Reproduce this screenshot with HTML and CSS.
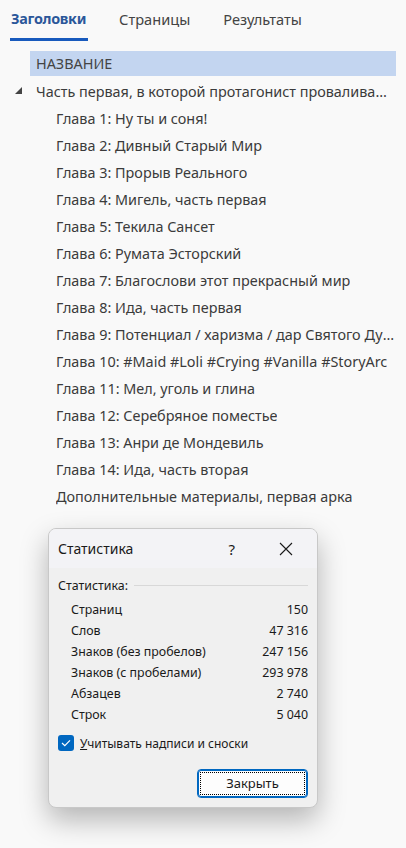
FILE: index.html
```html
<!DOCTYPE html>
<html lang="ru">
  <head>
    <meta charset="UTF-8" />
    <title>Навигация</title>
    <link rel="stylesheet" href="styles.css">
  </head>
  <body>
    <!-- tabs -->
    <div class="tabs">
      <div class="tab active">Заголовки</div>
      <div class="tab">Страницы</div>
      <div class="tab">Результаты</div>
    </div>

    <!-- heading tree -->
    <div class="tree">
      <div class="row title">НАЗВАНИЕ</div>
      <div class="row part">
        <span class="arrow"></span>
        <span class="label">Часть первая, в которой протагонист проваливается в другой мир</span>
      </div>
      <div class="row chapter"><span class="label">Глава 1: Ну ты и соня!</span></div>
      <div class="row chapter"><span class="label">Глава 2: Дивный Старый Мир</span></div>
      <div class="row chapter"><span class="label">Глава 3: Прорыв Реального</span></div>
      <div class="row chapter"><span class="label">Глава 4: Мигель, часть первая</span></div>
      <div class="row chapter"><span class="label">Глава 5: Текила Сансет</span></div>
      <div class="row chapter"><span class="label">Глава 6: Румата Эсторский</span></div>
      <div class="row chapter"><span class="label">Глава 7: Благослови этот прекрасный мир</span></div>
      <div class="row chapter"><span class="label">Глава 8: Ида, часть первая</span></div>
      <div class="row chapter"><span class="label">Глава 9: Потенциал / харизма / дар Святого Духа</span></div>
      <div class="row chapter"><span class="label">Глава 10: #Maid #Loli #Crying #Vanilla #StoryArc</span></div>
      <div class="row chapter"><span class="label">Глава 11: Мел, уголь и глина</span></div>
      <div class="row chapter"><span class="label">Глава 12: Серебряное поместье</span></div>
      <div class="row chapter"><span class="label">Глава 13: Анри де Мондевиль</span></div>
      <div class="row chapter"><span class="label">Глава 14: Ида, часть вторая</span></div>
      <div class="row chapter"><span class="label">Дополнительные материалы, первая арка</span></div>
    </div>

    <!-- statistics window -->
    <div class="dialog">
      <div class="dialog-head">
        <span class="dialog-title">Статистика</span>
        <span class="help">?</span>
        <svg class="close" width="14" height="14" viewBox="0 0 14 14">
          <path d="M1 1 L13 13 M13 1 L1 13" stroke="#1a1a1a" stroke-width="1.1" fill="none" />
        </svg>
      </div>
      <div class="dialog-body">
        <div class="group">
          <span>Статистика:</span>
          <span class="group-line"></span>
        </div>
        <table class="stats">
          <tr><td>Страниц</td><td>150</td></tr>
          <tr><td>Слов</td><td>47 316</td></tr>
          <tr><td>Знаков (без пробелов)</td><td>247 156</td></tr>
          <tr><td>Знаков (с пробелами)</td><td>293 978</td></tr>
          <tr><td>Абзацев</td><td>2 740</td></tr>
          <tr><td>Строк</td><td>5 040</td></tr>
        </table>
        <label class="check">
          <span class="box">
            <svg width="10" height="8" viewBox="0 0 10 8">
              <path d="M1 4 L3.8 6.6 L9 1.4" stroke="#fff" stroke-width="1.2" fill="none" />
            </svg>
          </span>
          <span><u>У</u>читывать надписи и сноски</span>
        </label>
        <div class="actions">
          <button class="btn"><span class="focus">Закрыть</span></button>
        </div>
      </div>
    </div>
  </body>
</html>
```

FILE: styles.css
```css
body {
  margin: 0;
  width: 406px;
  height: 848px;
  overflow: hidden;
  position: relative;
  background-color: #f9f9f9;
  font-family: "Noto Sans", sans-serif;
  font-size: 14.4px;
  color: #3b3b3b;
}

/* tabs */
.tabs {
  display: flex;
  padding: 8px 0 0 10px;
  height: 33px;
}
.tab {
  font-size: 14.6px;
  color: #444;
  line-height: 22px;
}
.tab:nth-child(2) {
  margin-left: 31px;
}
.tab:nth-child(3) {
  margin-left: 33px;
}
.tab.active {
  color: #2b579a;
  font-weight: bold;
  font-size: 14.4px;
  letter-spacing: -0.3px;
  padding: 0 2px 0 1px;
  border-bottom: 3px solid #185abd;
  height: 30px;
}

/* tree */
.tree {
  margin-top: 10px;
}
.row {
  height: 27px;
  display: flex;
  align-items: center;
  white-space: nowrap;
  overflow: hidden;
}
.row .label {
  overflow: hidden;
  text-overflow: ellipsis;
}
.title {
  margin: 0 10px 0 30px;
  height: 25px;
  padding-left: 6px;
  background-color: #c3d5f0;
  color: #444;
  margin-bottom: 2px;
}
.part {
  padding-left: 15px;
  padding-right: 16px;
}
.arrow {
  flex: none;
  width: 0;
  height: 0;
  border-left: 7px solid transparent;
  border-bottom: 7px solid #444;
  margin-right: 14px;
  margin-top: -2px;
}
.chapter {
  padding-left: 56px;
  padding-right: 10px;
}

/* dialog */
.dialog {
  position: absolute;
  left: 48px;
  top: 528px;
  width: 270px;
  height: 280px;
  border-radius: 8px;
  background-color: #f0f0f0;
  border: 1px solid #c8c8c8;
  box-sizing: border-box;
  box-shadow: 0 12px 28px rgba(0, 0, 0, 0.28);
  overflow: hidden;
  color: #1a1a1a;
  font-size: 12.4px;
}
.dialog-head {
  height: 39px;
  background-color: #f3f3f6;
  display: flex;
  align-items: center;
  padding-left: 9px;
}
.dialog-title {
  font-size: 14px;
  flex: 1;
}
.help {
  font-size: 15px;
  margin-right: 44px;
}
.close {
  margin-right: 24px;
}
.dialog-body {
  padding: 8px 9px 0 9px;
}
.group {
  display: flex;
  align-items: center;
  height: 18px;
}
.group-line {
  flex: 1;
  height: 1px;
  background-color: #d8d8d8;
  margin-left: 6px;
}
.stats {
  width: 100%;
  border-collapse: collapse;
  margin-top: 5px;
}
.stats td {
  height: 21px;
  padding: 0;
}
.stats td:first-child {
  padding-left: 13px;
}
.stats td:last-child {
  text-align: right;
}
.check {
  display: flex;
  align-items: center;
  margin-top: 7px;
  height: 22px;
  font-size: 12px;
}
.box {
  width: 16px;
  height: 16px;
  border-radius: 3px;
  background-color: #0067c0;
  display: flex;
  align-items: center;
  justify-content: center;
  margin-right: 6px;
}
.actions {
  display: flex;
  justify-content: flex-end;
  margin-top: 15px;
}
.btn {
  width: 111px;
  height: 29px;
  border: 1px solid #0067c0;
  border-radius: 4px;
  background-color: #fdfdfd;
  padding: 2px;
  font-family: inherit;
  font-size: 13px;
  color: #1a1a1a;
  box-shadow: inset 0 0 0 1px #0067c0;
}
.focus {
  display: block;
  height: 100%;
  box-sizing: border-box;
  border: 1px dotted #000;
  line-height: 21px;
}
```
